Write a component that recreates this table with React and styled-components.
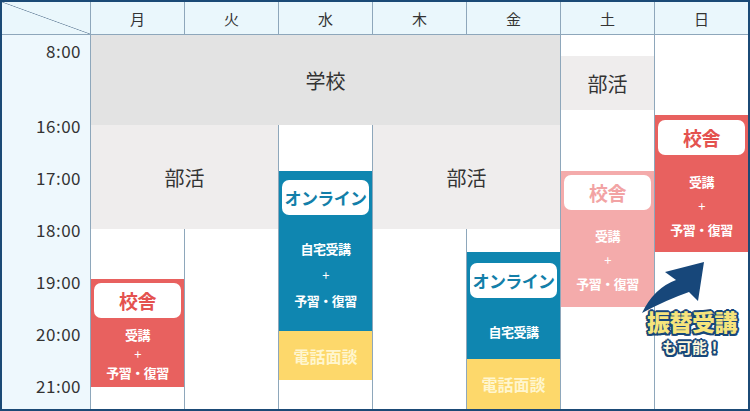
import React from "react";
import styled, { createGlobalStyle } from "styled-components";

const GlobalStyle = createGlobalStyle`
    * { box-sizing: border-box; }
    body {
        margin: 0;
        font-family: "Noto Sans CJK JP", "Noto Sans", sans-serif;
        color: #333;
    }
`;

const days = ["月", "火", "水", "木", "金", "土", "日"];
const times = ["16:00", "17:00", "18:00", "19:00", "20:00", "21:00"];

const Block = ({ col, row, bg, pad, gapTop, lh, badge, badgeColor, badgeSize, lines }) => (
    <Cell col={col} row={row} bg={bg} pad={pad}>
        <Badge color={badgeColor} size={badgeSize}>{badge}</Badge>
        <Sub gapTop={gapTop}>
            {lines.map((l) => (
                <Line key={l} lh={lh} plus={l === "+"}>{l}</Line>
            ))}
        </Sub>
    </Cell>
);

const App = () => {
    return (
        <>
            <GlobalStyle />
            <Frame>
                <Table>
                    <Corner />
                    {days.map((d, i) => (
                        <Head key={d} col={i + 2}>{d}</Head>
                    ))}
                    <TimeCol>
                        <Time h={30} mb={34}>8:00</Time>
                        {times.map((t) => (
                            <Time key={t} h={52}>{t}</Time>
                        ))}
                    </TimeCol>
                    {days.map((d, i) => (
                        <Lane key={d} col={i + 2} />
                    ))}

                    <Plain col="2 / 7" row="2 / 6" bg="#e3e3e3">学校</Plain>
                    <Plain col="2 / 4" row="6 / 8" bg="#efeded">部活</Plain>
                    <Plain col="5 / 7" row="6 / 8" bg="#efeded">部活</Plain>
                    <Plain col="7" row="3 / 4" bg="#efeded">部活</Plain>

                    <Block
                        col="4" row="7 / 12" bg="#0f86b0" pad={9} gapTop={21} lh={26}
                        badge="オンライン" badgeColor="#137fa9" badgeSize={17}
                        lines={["自宅受講", "+", "予習・復習"]}
                    />
                    <Phone col="4" row="12 / 14">電話面談</Phone>

                    <Block
                        col="6" row="9 / 13" bg="#0f86b0" pad={11} gapTop={21} lh={26}
                        badge="オンライン" badgeColor="#137fa9" badgeSize={17}
                        lines={["自宅受講"]}
                    />
                    <Phone col="6" row="13 / 16">電話面談</Phone>

                    <Block
                        col="2" row="10 / 15" bg="#e8615f" pad={4} gapTop={7} lh={19}
                        badge="校舎" badgeColor="#e4524f" badgeSize={19}
                        lines={["受講", "+", "予習・復習"]}
                    />
                    <Block
                        col="7" row="7 / 11" bg="#f4abab" pad={4} gapTop={14} lh={24}
                        badge="校舎" badgeColor="#f2a3a4" badgeSize={19}
                        lines={["受講", "+", "予習・復習"]}
                    />
                    <Block
                        col="8" row="5 / 9" bg="#e8615f" pad={5} gapTop={15} lh={24}
                        badge="校舎" badgeColor="#e4524f" badgeSize={19}
                        lines={["受講", "+", "予習・復習"]}
                    />

                    <Note>
                        <svg width="128" height="65" viewBox="0 0 128 65">
                            <path
                                d="M22 58 Q34 33 56 25 L45 17 L84 7 L78 46 L69 37 Q46 45 22 58 Z"
                                fill="#17477a"
                            />
                        </svg>
                        <Big>振替受講</Big>
                        <Small>も可能！</Small>
                    </Note>
                </Table>
            </Frame>
        </>
    );
};

export default App;

const Frame = styled.div`
    width: 750px;
    height: 411px;
    border: 2px solid #1b4a76;
    background: #fff;
`;
const Table = styled.div`
    display: grid;
    grid-template-columns: 88px repeat(7, 94px);
    grid-template-rows: 33px 21px 54px 5px 10px 46px 58px 23px 27px 28px 24px 28px 21px 7px 22px;
    position: relative;
`;
const Corner = styled.div`
    grid-column: 1;
    grid-row: 1;
    border-bottom: 1px solid #8ea7bb;
    background:
        linear-gradient(to top right, transparent calc(50% - 0.7px), #7891a8 50%, transparent calc(50% + 0.7px)),
        #eaf7fc;
`;
const Head = styled.div`
    grid-column: ${({ col }) => col};
    grid-row: 1;
    display: flex;
    align-items: center;
    justify-content: center;
    background: #eaf7fc;
    border-left: 1px solid #8ea7bb;
    border-bottom: 1px solid #8ea7bb;
    font-size: 15px;
    color: #333;
`;
const TimeCol = styled.div`
    grid-column: 1;
    grid-row: 2 / -1;
    display: flex;
    flex-direction: column;
    align-items: flex-end;
    padding-right: 9px;
    background: #eef8fd;
`;
const Time = styled.div`
    height: ${({ h }) => h}px;
    margin-bottom: ${({ mb }) => mb || 0}px;
    flex-shrink: 0;
    display: flex;
    align-items: center;
    font-size: 17px;
    letter-spacing: 0.5px;
    color: #333;
`;
const Lane = styled.div`
    grid-column: ${({ col }) => col};
    grid-row: 2 / -1;
    border-left: 1px solid #8ea7bb;
    background: #fff;
`;
const Plain = styled.div`
    grid-column: ${({ col }) => col};
    grid-row: ${({ row }) => row};
    margin-left: 1px;
    display: flex;
    align-items: center;
    justify-content: center;
    background: ${({ bg }) => bg};
    font-size: 20px;
    color: #333;
`;
const Cell = styled.div`
    grid-column: ${({ col }) => col};
    grid-row: ${({ row }) => row};
    margin-left: 1px;
    display: flex;
    flex-direction: column;
    padding: ${({ pad }) => pad}px 3px 0;
    background: ${({ bg }) => bg};
`;
const Badge = styled.div`
    height: 35px;
    display: flex;
    align-items: center;
    justify-content: center;
    background: #fff;
    border-radius: 7px;
    font-size: ${({ size }) => size}px;
    font-weight: 700;
    letter-spacing: -0.6px;
    white-space: nowrap;
    color: ${({ color }) => color};
`;
const Sub = styled.div`
    display: flex;
    flex-direction: column;
    align-items: center;
    margin-top: ${({ gapTop }) => gapTop}px;
`;
const Line = styled.div`
    height: ${({ lh }) => lh}px;
    line-height: ${({ lh }) => lh}px;
    font-size: 13px;
    font-weight: ${({ plus }) => (plus ? 400 : 700)};
    letter-spacing: -0.5px;
    color: #fff;
`;
const Phone = styled.div`
    grid-column: ${({ col }) => col};
    grid-row: ${({ row }) => row};
    margin-left: 1px;
    display: flex;
    align-items: center;
    justify-content: center;
    background: #fdd86b;
    font-size: 16px;
    font-weight: 700;
    color: #fff6cf;
`;
const Note = styled.div`
    grid-column: 7 / 9;
    grid-row: 9 / 16;
    display: flex;
    flex-direction: column;
    align-items: flex-end;
    padding-top: 3px;
    z-index: 2;
    pointer-events: none;
`;
const outline = `
    text-shadow:
        2px 0 0 #17477a, -2px 0 0 #17477a, 0 2px 0 #17477a, 0 -2px 0 #17477a,
        1.5px 1.5px 0 #17477a, -1.5px 1.5px 0 #17477a, 1.5px -1.5px 0 #17477a, -1.5px -1.5px 0 #17477a;
`;
const Big = styled.div`
    width: 112px;
    margin-top: -11px;
    text-align: center;
    font-size: 23px;
    font-weight: 900;
    line-height: 25px;
    letter-spacing: -0.5px;
    color: #f6e47c;
    ${outline}
`;
const Small = styled.div`
    width: 112px;
    margin-top: 4px;
    text-align: center;
    font-size: 15px;
    font-weight: 700;
    line-height: 17px;
    color: #fdf6dc;
    ${outline}
`;
